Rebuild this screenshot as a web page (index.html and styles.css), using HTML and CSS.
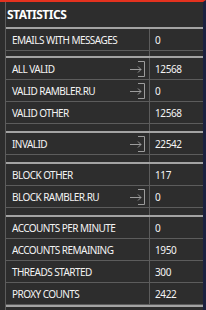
FILE: index.html
```html
<!DOCTYPE html>
<html lang="en">
<head>
	<meta charset="utf-8" />
	<title>Statistics</title>
	<link rel="stylesheet" href="styles.css">
</head>
<body>
	<div class="frame">
		<div class="panel">
			<div class="title">STATISTICS</div>

			<div class="group">
				<div class="row"><div class="label">EMAILS WITH MESSAGES</div><div class="value">0</div></div>
				<div class="row spacer first"><div class="label"></div><div class="value"></div></div>
			</div>

			<div class="group">
				<div class="row">
					<div class="label">ALL VALID
						<svg class="export" viewBox="0 0 16 16"><path d="M0 8.5H11M8 5.5L11 8.5L8 11.5M8 0.5H14.5V15.5H8"/></svg>
					</div>
					<div class="value">12568</div>
				</div>
				<div class="row">
					<div class="label">VALID RAMBLER.RU
						<svg class="export" viewBox="0 0 16 16"><path d="M0 8.5H11M8 5.5L11 8.5L8 11.5M8 0.5H14.5V15.5H8"/></svg>
					</div>
					<div class="value">0</div>
				</div>
				<div class="row"><div class="label">VALID OTHER</div><div class="value">12568</div></div>
				<div class="row spacer"><div class="label"></div><div class="value"></div></div>
			</div>

			<div class="group">
				<div class="row">
					<div class="label">INVALID
						<svg class="export" viewBox="0 0 16 16"><path d="M0 8.5H11M8 5.5L11 8.5L8 11.5M8 0.5H14.5V15.5H8"/></svg>
					</div>
					<div class="value">22542</div>
				</div>
				<div class="row spacer"><div class="label"></div><div class="value"></div></div>
			</div>

			<div class="group">
				<div class="row"><div class="label">BLOCK OTHER</div><div class="value">117</div></div>
				<div class="row">
					<div class="label">BLOCK RAMBLER.RU
						<svg class="export" viewBox="0 0 16 16"><path d="M0 8.5H11M8 5.5L11 8.5L8 11.5M8 0.5H14.5V15.5H8"/></svg>
					</div>
					<div class="value">0</div>
				</div>
				<div class="row spacer"><div class="label"></div><div class="value"></div></div>
			</div>

			<div class="group last">
				<div class="row"><div class="label">ACCOUNTS PER MINUTE</div><div class="value">0</div></div>
				<div class="row"><div class="label">ACCOUNTS REMAINING</div><div class="value">1950</div></div>
				<div class="row"><div class="label">THREADS STARTED</div><div class="value">300</div></div>
				<div class="row"><div class="label">PROXY COUNTS</div><div class="value">2422</div></div>
			</div>
		</div>
	</div>
</body>
</html>
```

FILE: styles.css
```css
body{
	margin: 0;
	padding: 0;
	background: #2d2d2d;
	color: #f4f4f4;
	font: 10px "Noto Sans", "Liberation Sans", sans-serif;
}

.frame{
	width: 203px;
	height: 308px;
	border-top: 2px solid #e4321f;
	border-right: 3px solid #1b2140;
}

.panel{
	margin-left: 5px;
	height: 100%;
	border-left: 1px solid #5c5c5c;
}

.title{
	height: 25px;
	padding-left: 1px;
	display: flex;
	align-items: center;
	font-weight: bold;
	font-size: 12px;
	letter-spacing: -0.5px;
	color: #ffffff;
}

.group{
	border-top: 2px solid #a3a3a3;
}

.group.last{
	border-bottom: 2px solid #a3a3a3;
}

.row{
	display: grid;
	grid-template-columns: 144px 1fr;
	height: 21px;
	border-bottom: 1px solid #5c5c5c;
}

.row.spacer{
	height: 7px;
	border-bottom: none;
}

.row.spacer.first{
	height: 5px;
}

.label{
	display: flex;
	align-items: center;
	justify-content: space-between;
	padding-left: 6px;
	padding-right: 3px;
	border-right: 1px solid #5c5c5c;
	letter-spacing: -0.55px;
}

.value{
	display: flex;
	align-items: center;
	padding-left: 5px;
	letter-spacing: -0.4px;
}

.export{
	width: 16px;
	height: 16px;
	fill: none;
	stroke: #9c9c9c;
	stroke-width: 1;
}
```
